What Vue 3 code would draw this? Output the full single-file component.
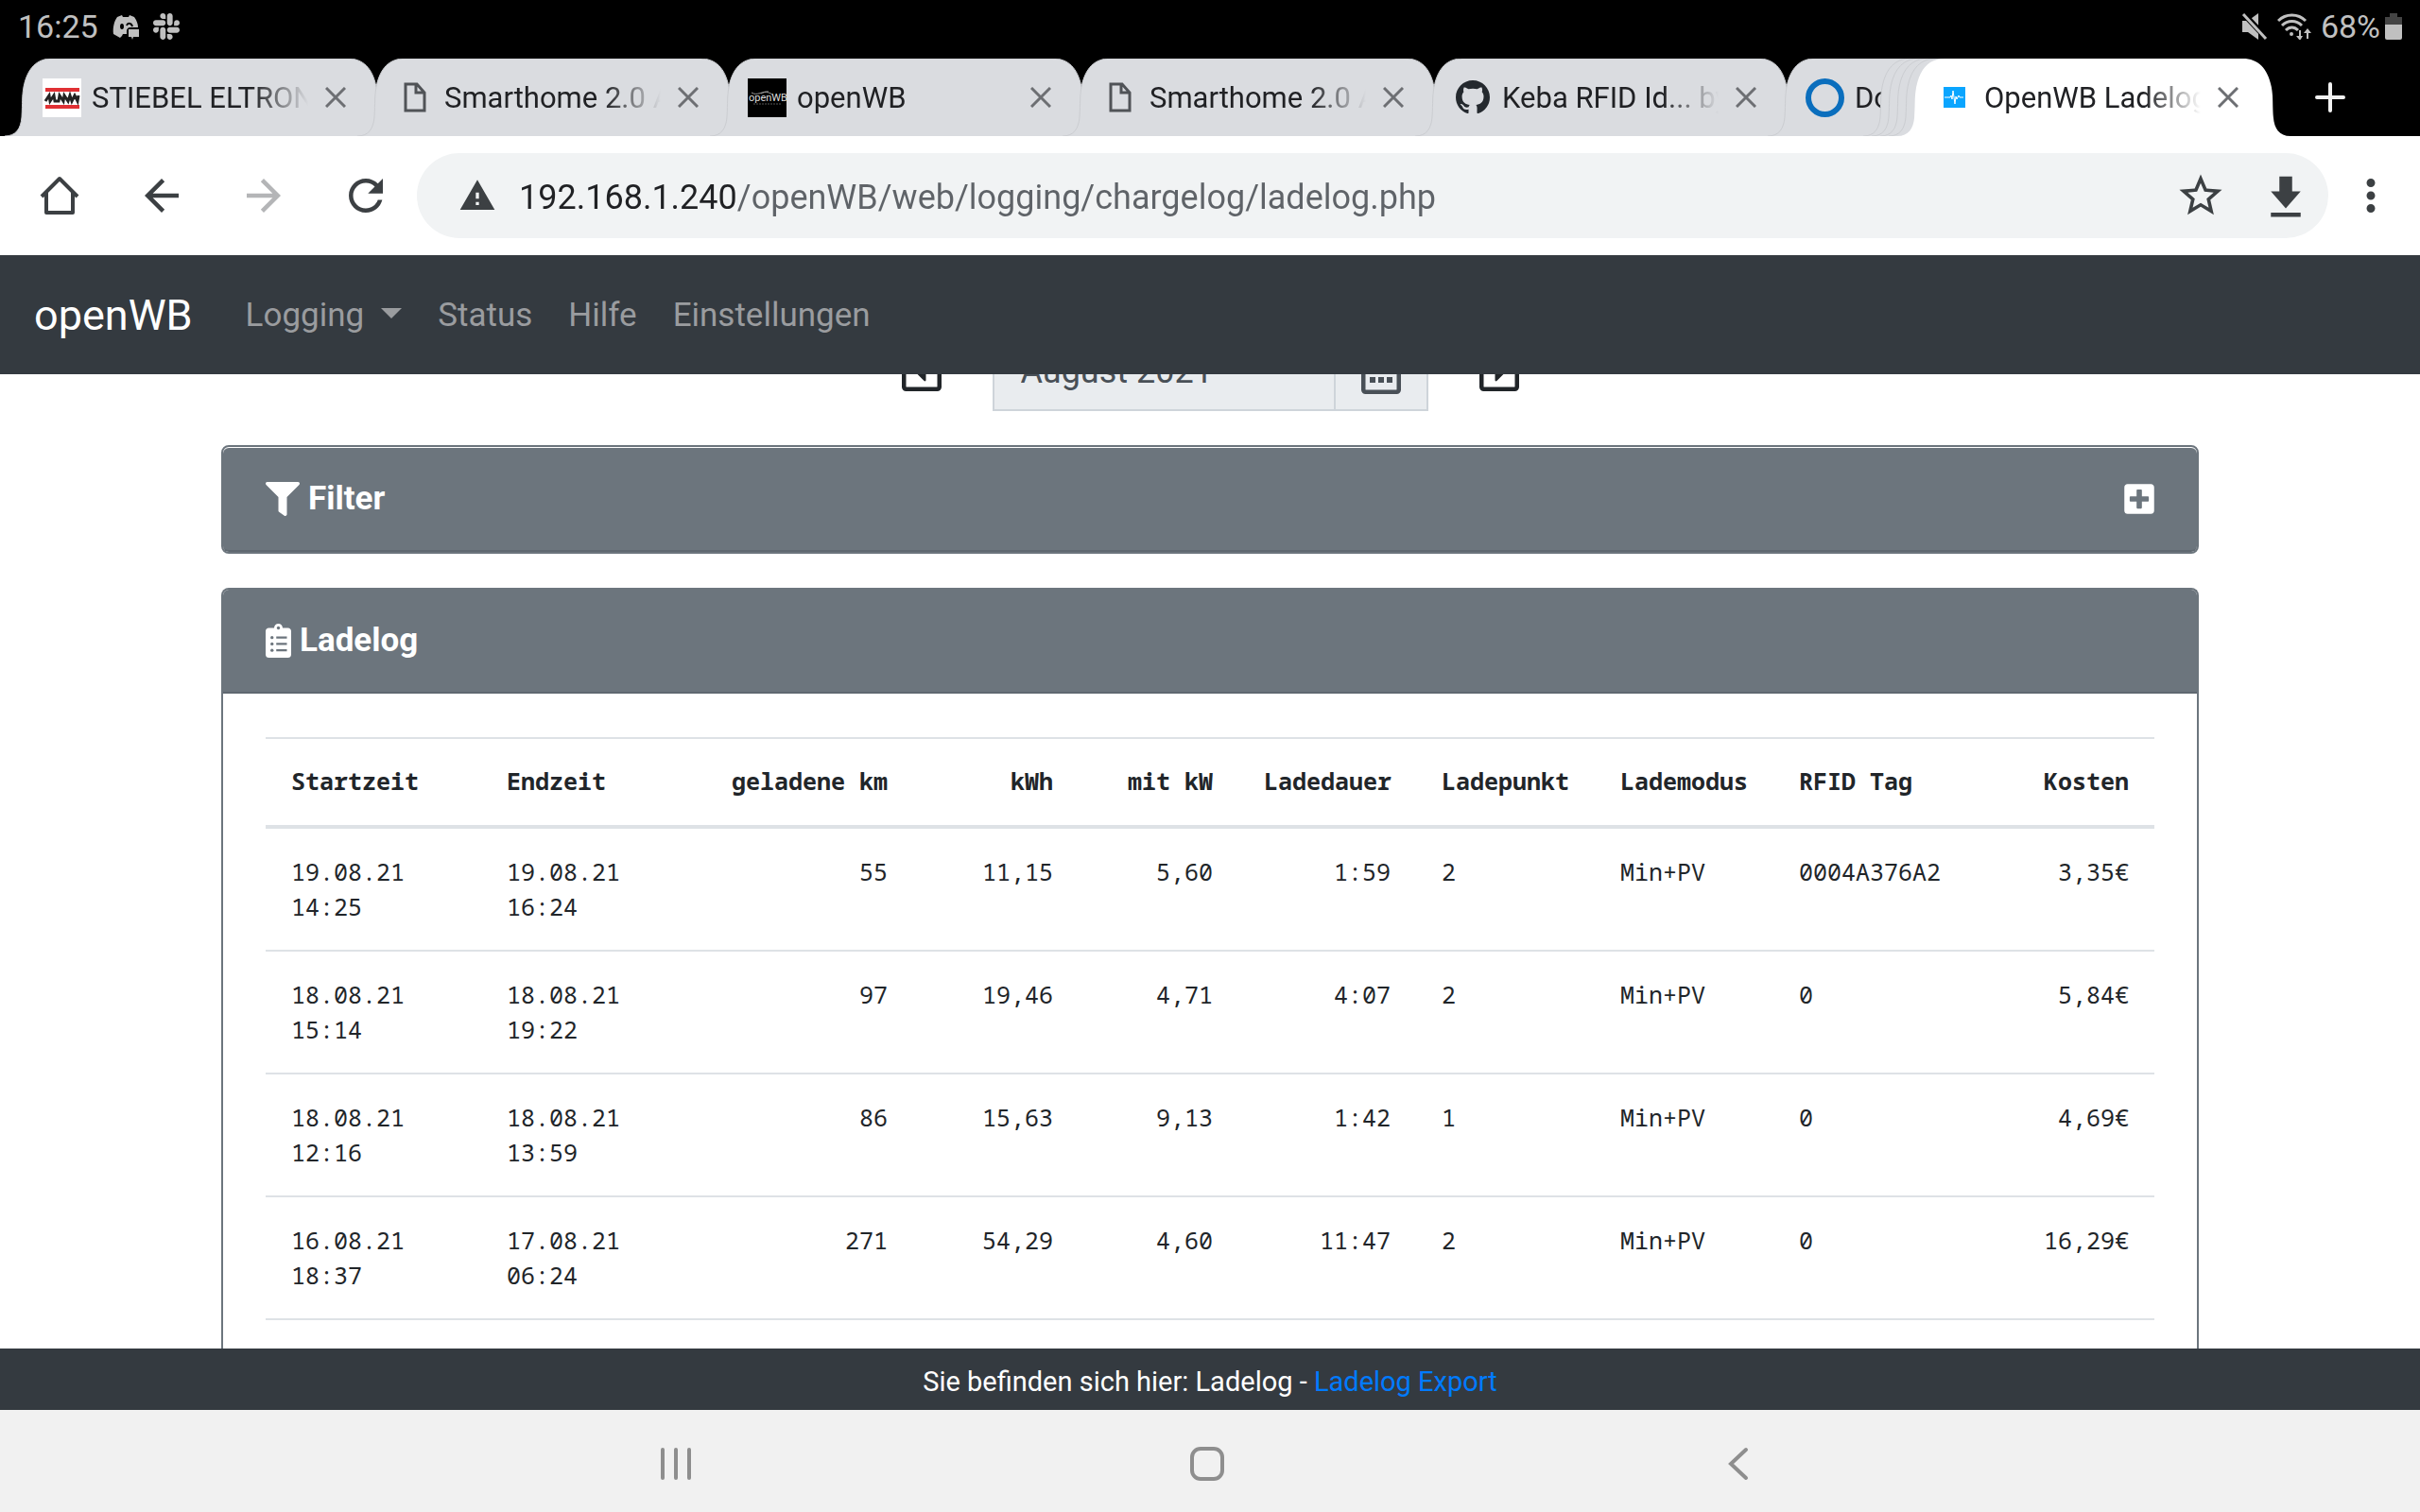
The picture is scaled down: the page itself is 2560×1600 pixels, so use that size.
<script setup>
import { ref } from 'vue'

const url = ref('192.168.1.240/openWB/web/logging/chargelog/ladelog.php')
const month = ref('August 2021')

const tabs = [
  { title: 'STIEBEL ELTRON', icon: 'stiebel' },
  { title: 'Smarthome 2.0 A', icon: 'page' },
  { title: 'openWB', icon: 'openwb' },
  { title: 'Smarthome 2.0 A', icon: 'page' },
  { title: 'Keba RFID Id... by', icon: 'github' },
  { title: 'Do', icon: 'ring', state: 'covered' },
  { state: 'tucked' },
  { state: 'tucked' },
  { state: 'tucked' },
  { state: 'tucked' },
  { title: 'OpenWB Ladelog', icon: 'pulse', state: 'active' }
]

const columns = [
  { key: 'start', label: 'Startzeit', width: 228 },
  { key: 'end', label: 'Endzeit', width: 228 },
  { key: 'km', label: 'geladene km', width: 229, right: true },
  { key: 'kwh', label: 'kWh', width: 175, right: true },
  { key: 'kw', label: 'mit kW', width: 169, right: true },
  { key: 'duration', label: 'Ladedauer', width: 188, right: true },
  { key: 'point', label: 'Ladepunkt', width: 189 },
  { key: 'mode', label: 'Lademodus', width: 189 },
  { key: 'rfid', label: 'RFID Tag', width: 214 },
  { key: 'cost', label: 'Kosten', width: 189, right: true }
]

const rows = [
  { start: '19.08.21 14:25', end: '19.08.21 16:24', km: '55', kwh: '11,15', kw: '5,60', duration: '1:59', point: '2', mode: 'Min+PV', rfid: '0004A376A2', cost: '3,35€' },
  { start: '18.08.21 15:14', end: '18.08.21 19:22', km: '97', kwh: '19,46', kw: '4,71', duration: '4:07', point: '2', mode: 'Min+PV', rfid: '0', cost: '5,84€' },
  { start: '18.08.21 12:16', end: '18.08.21 13:59', km: '86', kwh: '15,63', kw: '9,13', duration: '1:42', point: '1', mode: 'Min+PV', rfid: '0', cost: '4,69€' },
  { start: '16.08.21 18:37', end: '17.08.21 06:24', km: '271', kwh: '54,29', kw: '4,60', duration: '11:47', point: '2', mode: 'Min+PV', rfid: '0', cost: '16,29€' }
]
</script>

<template>
  <div class="screen">
    <header class="status-bar">
      <div class="status-group">
        <span>16:25</span>
        <svg class="status-icon" viewBox="0 0 28 28">
          <path d="M5 4 10 2l1 2h6l1-2 5 2c3 4 4 8 4 11h-8c-3 0-4 2-4 4v3h-4l-1 2-2 2-7-4C0 15 2 8 5 4z" />
          <ellipse cx="10" cy="14" rx="2" ry="3" fill="#000" />
          <path d="M15 13c1-3 5-3 6 1" fill="none" stroke="#000" stroke-width="2" />
          <path d="M17 17h11v8h-6l-1 3-1-3h-3z" />
        </svg>
        <svg class="status-icon slack" viewBox="0 32 448 448">
          <path d="M94.12 315.1c0 25.9-21.16 47.06-47.06 47.06S0 341 0 315.1c0-25.9 21.16-47.06 47.06-47.06h47.06v47.06zm23.72 0c0-25.9 21.16-47.06 47.06-47.06s47.06 21.16 47.06 47.06v117.84c0 25.9-21.16 47.06-47.06 47.06s-47.06-21.16-47.06-47.06V315.1zm47.06-188.98c-25.9 0-47.06-21.16-47.06-47.06S139 32 164.9 32s47.06 21.16 47.06 47.06v47.06H164.9zm0 23.72c25.9 0 47.06 21.16 47.06 47.06s-21.16 47.06-47.06 47.06H47.06C21.16 243.96 0 222.8 0 196.9s21.16-47.06 47.06-47.06H164.9zm188.98 47.06c0-25.9 21.16-47.06 47.06-47.06 25.9 0 47.06 21.16 47.06 47.06s-21.16 47.06-47.06 47.06h-47.06V196.9zm-23.72 0c0 25.9-21.16 47.06-47.06 47.06-25.9 0-47.06-21.16-47.06-47.06V79.06c0-25.9 21.16-47.06 47.06-47.06 25.9 0 47.06 21.16 47.06 47.06V196.9zM283.1 385.88c25.9 0 47.06 21.16 47.06 47.06 0 25.9-21.16 47.06-47.06 47.06-25.9 0-47.06-21.16-47.06-47.06v-47.06h47.06zm0-23.72c-25.9 0-47.06-21.16-47.06-47.06 0-25.9 21.16-47.06 47.06-47.06h117.84c25.9 0 47.06 21.16 47.06 47.06 0 25.9-21.16 47.06-47.06 47.06H283.1z" />
        </svg>
      </div>
      <div class="status-group system">
        <svg class="status-icon" viewBox="0 0 28 28">
          <path d="M1 8h6l11-8v28L7 20H1z" />
          <path d="M0 -2 28 28" stroke="#000" stroke-width="6" />
          <path d="M2 1 26 27" stroke="#c0c0c0" stroke-width="3" />
        </svg>
        <svg class="status-icon wifi" viewBox="0 0 36 28">
          <g fill="none" stroke="#c0c0c0" stroke-width="3">
            <path d="M1 8c8-8 21-8 29 0" />
            <path d="M5 13c6-6 15-6 21 0" />
            <path d="M9 18c4-4 9-4 13 0" />
          </g>
          <circle cx="15" cy="22" r="2" />
          <path d="M23 18h2v6h2l-3 5-4-5h3zM31 27h2v-6h3l-4-5-4 5h3z" />
        </svg>
        <span>68%</span>
        <svg class="status-icon battery" viewBox="0 0 18 28">
          <path d="M5 0h8v4h5v9H0V4h5z" fill="#444" />
          <path d="M0 12h18v14q0 2-2 2H2q-2 0-2-2z" />
        </svg>
      </div>
    </header>

    <nav class="tab-strip" aria-label="Tabs">
      <div v-for="(tab, i) in tabs" :key="i" class="tab" :class="tab.state">
        <svg class="tab-shape" viewBox="0 0 413 82" preserveAspectRatio="none">
          <path d="M0 82C12 82 17 74 18 62C19 45 18 42 20 30C24 10 34 0 50 0H363C379 0 389 10 393 30C395 42 394 45 395 62C396 74 401 82 413 82" />
        </svg>
        <template v-if="tab.title">
          <span class="favicon">
            <svg v-if="tab.icon === 'stiebel'" width="41" height="41" viewBox="0 0 41 41">
              <path d="M0 0h41v41H0z" fill="#fff" />
              <path d="M3 10h36v4H3zM3 28h36v4H3z" fill="#e03034" />
              <path d="M3 24l4-6 1 6 4-6 1 6h4l1-6 4 6 1-6 4 6 2-6 2 6 3-6 3 6 1-6" fill="none" stroke="#222" stroke-width="3" />
            </svg>
            <svg v-else-if="tab.icon === 'page'" width="24" height="32" viewBox="0 0 24 32">
              <path d="M2 2h12l8 9v19H2zM13 2v9h9" fill="none" stroke="#505357" stroke-width="3" />
            </svg>
            <svg v-else-if="tab.icon === 'openwb'" width="41" height="41" viewBox="0 0 41 41">
              <path d="M0 0h41v41H0z" />
              <path d="M4 15c6 4 12-2 18-1M14 16c5-3 10-1 13 2" fill="none" stroke="#999" />
              <text x="1" y="24" font-size="11" fill="#ddd">openWB</text>
              <path d="M6 27h29" stroke="#555" stroke-dasharray="2 1" />
            </svg>
            <svg v-else-if="tab.icon === 'github'" width="36" height="36" viewBox="0 0 16 16">
              <path d="M8 0C3.58 0 0 3.58 0 8c0 3.54 2.29 6.53 5.47 7.59.4.07.55-.17.55-.38 0-.19-.01-.82-.01-1.49-2.01.37-2.53-.49-2.69-.94-.09-.23-.48-.94-.82-1.13-.28-.15-.68-.52-.01-.53.63-.01 1.08.58 1.23.82.72 1.21 1.87.87 2.33.66.07-.52.28-.87.51-1.07-1.78-.2-3.64-.89-3.64-3.95 0-.87.31-1.59.82-2.15-.08-.2-.36-1.02.08-2.12 0 0 .67-.21 2.2.82.64-.18 1.32-.27 2-.27s1.36.09 2 .27c1.53-1.04 2.2-.82 2.2-.82.44 1.1.16 1.92.08 2.12.51.56.82 1.27.82 2.15 0 3.07-1.87 3.75-3.65 3.95.29.25.54.73.54 1.48 0 1.07-.01 1.93-.01 2.2 0 .21.15.46.55.38A8.01 8.01 0 0 0 16 8c0-4.42-3.58-8-8-8z" fill="#24292e" />
            </svg>
            <svg v-else-if="tab.icon === 'ring'" width="41" height="41" viewBox="0 0 41 41">
              <circle cx="20.500" cy="20.500" r="17.500" fill="none" stroke="#0a6ebd" stroke-width="6" />
            </svg>
            <svg v-else width="23" height="22" viewBox="0 0 23 22">
              <path d="M0 0h23v22H0z" fill="#0aa5ff" />
              <path d="M1 11h6l1-2 1 4 1-9 2 14 1-8 1 3 2-4 1 2h4" fill="none" stroke="#fff" stroke-width="1" />
            </svg>
          </span>
          <span class="tab-title">{{ tab.title }}</span>
          <button v-if="tab.state !== 'covered'" class="icon-button" type="button" aria-label="Tab schließen">
            <svg width="22" height="22" viewBox="0 0 22 22">
              <path d="M1 1 21 21M21 1 1 21" stroke="#6d6f73" stroke-width="3" />
            </svg>
          </button>
        </template>
      </div>
      <button class="icon-button new-tab" type="button" aria-label="Neuer Tab">
        <svg width="32" height="32" viewBox="0 0 32 32">
          <path d="M16 2v28M2 16h28" stroke="#f1f1f1" stroke-width="4" stroke-linecap="round" />
        </svg>
      </button>
    </nav>

    <div class="toolbar">
      <button class="icon-button tool" type="button" aria-label="Startseite">
        <svg width="54" height="54" viewBox="0 0 54 54">
          <path d="M8 28 27 9l19 19M13 24v21h28V24" fill="none" stroke="#3c4043" stroke-width="4" stroke-linejoin="round" />
        </svg>
      </button>
      <button class="icon-button tool" type="button" aria-label="Zurück">
        <svg width="54" height="54" viewBox="0 0 24 24">
          <path d="M20 11H7.830l5.590-5.590L12 4l-8 8 8 8 1.410-1.410L7.830 13H20v-2z" fill="#3c4043" />
        </svg>
      </button>
      <button class="icon-button tool" type="button" aria-label="Vorwärts" disabled>
        <svg width="54" height="54" viewBox="0 0 24 24">
          <path d="M12 4l-1.410 1.410L16.170 11H4v2h12.170l-5.580 5.590L12 20l8-8z" fill="#b4b5b7" />
        </svg>
      </button>
      <button class="icon-button tool" type="button" aria-label="Neu laden">
        <svg width="54" height="54" viewBox="0 0 24 24">
          <path d="M17.650 6.350C16.200 4.900 14.210 4 12 4c-4.420 0-7.990 3.580-7.990 8s3.570 8 7.990 8c3.730 0 6.840-2.550 7.730-6h-2.080c-.82 2.330-3.040 4-5.650 4-3.310 0-6-2.690-6-6s2.690-6 6-6c1.660 0 3.140.69 4.220 1.780L13 11h7V4l-2.350 2.350z" fill="#3c4043" />
        </svg>
      </button>
      <div class="address">
        <svg width="40" height="40" viewBox="0 0 24 24">
          <path d="M1 21h22L12 2 1 21zm12-3h-2v-2h2v2zm0-4h-2v-4h2v4z" fill="#3c4043" />
        </svg>
        <input v-model="url" class="url" type="text" aria-label="Adresse" />
        <button class="icon-button tool-small" type="button" aria-label="Lesezeichen">
          <svg width="54" height="54" viewBox="0 0 24 24">
            <path d="M22 9.240l-7.190-.62L12 2 9.190 8.630 2 9.240l5.460 4.730L5.820 21 12 17.270 18.180 21l-1.630-7.030L22 9.240zM12 15.400l-3.760 2.270 1-4.280-3.320-2.880 4.380-.38L12 6.100l1.710 4.040 4.380.38-3.320 2.880 1 4.280L12 15.400z" fill="#3c4043" />
          </svg>
        </button>
        <button class="icon-button tool-small" type="button" aria-label="Herunterladen">
          <svg width="54" height="54" viewBox="0 0 24 24">
            <path d="M19 11h-4V4H9v7H5l7 8 7-8zM5 21v2h14v-2z" fill="#3c4043" transform="translate(0 -1)" />
          </svg>
        </button>
      </div>
      <button class="icon-button tool-small" type="button" aria-label="Menü">
        <svg width="54" height="54" viewBox="0 0 24 24">
          <path d="M12 8c1.100 0 2-.9 2-2s-.9-2-2-2-2 .9-2 2 .9 2 2 2zm0 2c-1.100 0-2 .9-2 2s.9 2 2 2 2-.9 2-2-.9-2-2-2zm0 6c-1.100 0-2 .9-2 2s.9 2 2 2 2-.9 2-2-.9-2-2-2z" fill="#3c4043" />
        </svg>
      </button>
    </div>

    <nav class="navbar">
      <a class="brand" href="#">openWB</a>
      <a class="nav-link dropdown" href="#">Logging</a>
      <a class="nav-link" href="#">Status</a>
      <a class="nav-link" href="#">Hilfe</a>
      <a class="nav-link" href="#">Einstellungen</a>
    </nav>

    <main class="content">
      <form class="month-row" @submit.prevent>
        <button class="icon-button" type="button" aria-label="Vorheriger Monat">
          <svg width="42" height="48" viewBox="0 0 448 512">
            <path d="M272 157.100v197.800c0 10.700-13 16.100-20.500 8.500l-98.300-98.900c-4.700-4.700-4.700-12.200 0-16.900l98.300-98.900c7.500-7.700 20.500-2.300 20.500 8.400zM448 80v352c0 26.500-21.500 48-48 48H48c-26.500 0-48-21.500-48-48V80c0-26.500 21.500-48 48-48h352c26.500 0 48 21.500 48 48zm-48 346V86c0-3.300-2.700-6-6-6H54c-3.300 0-6 2.700-6 6v340c0 3.300 2.700 6 6 6h340c3.300 0 6-2.700 6-6z" fill="#212529" />
          </svg>
        </button>
        <div class="month-group">
          <input v-model="month" class="month" type="text" aria-label="Monat" readonly />
          <button class="icon-button calendar" type="button" aria-label="Kalender">
            <svg width="42" height="48" viewBox="0 0 448 512">
              <path d="M96 224h64v64H96zM192 224h64v64h-64zM288 224h64v64h-64zM96 320h64v64H96zM192 320h64v64h-64zM288 320h64v64h-64z" fill="#495057" />
              <path d="M448 112v352c0 26.500-21.500 48-48 48H48c-26.500 0-48-21.500-48-48V112c0-26.500 21.500-48 48-48h48V12c0-6.600 5.400-12 12-12h40c6.600 0 12 5.400 12 12v52h128V12c0-6.600 5.400-12 12-12h40c6.600 0 12 5.400 12 12v52h48c26.500 0 48 21.500 48 48zm-48 346V160H48v298c0 3.300 2.700 6 6 6h340c3.300 0 6-2.700 6-6z" fill="#495057" />
            </svg>
          </button>
        </div>
        <button class="icon-button" type="button" aria-label="Nächster Monat">
          <svg width="42" height="48" viewBox="0 0 448 512">
            <path d="M176 354.900V157.100c0-10.700 13-16.100 20.500-8.500l98.300 98.900c4.700 4.700 4.700 12.200 0 16.900l-98.300 98.900c-7.500 7.700-20.500 2.300-20.500-8.400zM448 80v352c0 26.500-21.500 48-48 48H48c-26.500 0-48-21.500-48-48V80c0-26.500 21.500-48 48-48h352c26.500 0 48 21.500 48 48zm-48 346V86c0-3.300-2.700-6-6-6H54c-3.300 0-6 2.700-6 6v340c0 3.300 2.700 6 6 6h340c3.300 0 6-2.700 6-6z" fill="#212529" />
          </svg>
        </button>
      </form>

      <section class="card filter-card">
        <div class="card-header">
          <svg width="36" height="36" viewBox="0 0 512 512">
            <path d="M487.976 0H24.028C2.710 0-8.047 25.866 7.058 40.971L192 225.941V432c0 7.831 3.821 15.170 10.237 19.662l80 55.980C298.020 518.690 320 507.493 320 487.980V225.941l184.947-184.970C520.021 25.896 509.338 0 487.976 0z" fill="#fff" />
          </svg>
          <h2>Filter</h2>
          <button class="icon-button expand" type="button" aria-label="Filter aufklappen">
            <svg width="32" height="36" viewBox="0 0 448 512">
              <path d="M400 32H48C21.500 32 0 53.500 0 80v352c0 26.500 21.500 48 48 48h352c26.500 0 48-21.500 48-48V80c0-26.500-21.500-48-48-48zm-32 252c0 6.600-5.400 12-12 12h-92v92c0 6.600-5.400 12-12 12h-56c-6.600 0-12-5.400-12-12v-92H92c-6.600 0-12-5.400-12-12v-56c0-6.600 5.400-12 12-12h92v-92c0-6.600 5.400-12 12-12h56c6.600 0 12 5.400 12 12v92h92c6.600 0 12 5.400 12 12v56z" fill="#fff" />
            </svg>
          </button>
        </div>
      </section>

      <section class="card log-card">
        <div class="card-header">
          <svg width="27" height="36" viewBox="0 0 384 512">
            <path d="M336 64h-80c0-35.300-28.700-64-64-64s-64 28.700-64 64H48C21.500 64 0 85.500 0 112v352c0 26.500 21.500 48 48 48h288c26.500 0 48-21.500 48-48V112c0-26.500-21.500-48-48-48z" fill="#fff" />
            <g fill="#6c757d">
              <circle cx="192" cy="64" r="24" />
              <circle cx="96" cy="208" r="24" />
              <circle cx="96" cy="304" r="24" />
              <circle cx="96" cy="400" r="24" />
              <path d="M160 192h160v32H160zM160 288h160v32H160zM160 384h160v32H160z" />
            </g>
          </svg>
          <h2>Ladelog</h2>
        </div>
        <div class="card-body">
          <table>
            <colgroup>
              <col v-for="col in columns" :key="col.key" :style="{ width: col.width + 'px' }" />
            </colgroup>
            <thead>
              <tr>
                <th v-for="col in columns" :key="col.key" :class="{ right: col.right }" scope="col">{{ col.label }}</th>
              </tr>
            </thead>
            <tbody>
              <tr v-for="row in rows" :key="row.start">
                <td v-for="col in columns" :key="col.key" :class="{ right: col.right }">{{ row[col.key] }}</td>
              </tr>
            </tbody>
          </table>
        </div>
      </section>
    </main>

    <footer class="footer">
      Sie befinden sich hier: Ladelog - <a href="#">Ladelog Export</a>
    </footer>

    <div class="system-bar">
      <button class="icon-button" type="button" aria-label="Letzte Apps">
        <svg width="38" height="38" viewBox="0 0 38 38">
          <path d="M5 4v30M19 4v30M33 4v30" stroke="#8e8e8e" stroke-width="4" stroke-linecap="round" />
        </svg>
      </button>
      <button class="icon-button" type="button" aria-label="Home">
        <svg width="38" height="38" viewBox="0 0 38 38">
          <rect x="3" y="3" width="32" height="32" rx="9" fill="none" stroke="#8e8e8e" stroke-width="4" />
        </svg>
      </button>
      <button class="icon-button" type="button" aria-label="Zurück">
        <svg width="38" height="38" viewBox="0 0 38 38">
          <path d="M27 4 11 19l16 15" fill="none" stroke="#8e8e8e" stroke-width="4" stroke-linecap="round" />
        </svg>
      </button>
    </div>
  </div>
</template>

<style>
body {
  margin: 0;
  background: #fff;
}
</style>

<style scoped>
.screen {
  display: flex;
  flex-direction: column;
  height: 100vh;
  overflow: hidden;
  font-family: Roboto, 'Liberation Sans', sans-serif;
  color: #212529;
}

svg {
  display: block;
  flex: none;
}

a {
  text-decoration: none;
}

.icon-button {
  display: flex;
  align-items: center;
  justify-content: center;
  flex: none;
  padding: 0;
  border: 0;
  background: none;
}

/* android status bar */
.status-bar {
  display: flex;
  justify-content: space-between;
  flex: none;
  height: 62px;
  padding: 0 19px;
  box-sizing: border-box;
  background: #000;
  color: #c0c0c0;
  font-size: 34px;
}
.status-group {
  display: flex;
  align-items: center;
  height: 56px;
  gap: 15px;
}
.status-group.system {
  gap: 10px;
}
.status-icon {
  width: 28px;
  height: 28px;
  fill: #c0c0c0;
}
.wifi {
  width: 36px;
}
.battery {
  width: 18px;
  margin-left: -5px;
}

/* browser tabs */
.tab-strip {
  display: flex;
  flex: none;
  height: 82px;
  padding-left: 45px;
  background: #000;
}
.tab {
  position: relative;
  display: flex;
  align-items: center;
  flex: none;
  width: 413px;
  margin-left: -40px;
  padding: 0 52px 0 40px;
  box-sizing: border-box;
}
.tab-shape {
  position: absolute;
  inset: 0;
  width: 100%;
  height: 100%;
  fill: #dadce0;
  stroke: #cbcdd1;
}
.tab.covered {
  margin-right: 92px;
}
.tab.tucked,
.tab.active {
  margin-left: -404px;
}
.tab.active {
  width: 416px;
  padding-right: 55px;
}
.tab.active .tab-shape {
  fill: #fff;
  stroke: none;
}
.favicon {
  position: relative;
  display: flex;
  justify-content: center;
  flex: none;
  width: 41px;
}
.tab-title {
  position: relative;
  flex: 1;
  min-width: 0;
  margin: 0 18px 0 11px;
  padding-top: 2px;
  overflow: hidden;
  white-space: nowrap;
  font-size: 31px;
  line-height: 40px;
  color: #202124;
  mask-image: linear-gradient(to right, #000 74%, transparent 100%);
}
.tab .icon-button {
  position: relative;
}
.new-tab {
  width: 84px;
}

/* toolbar */
.toolbar {
  display: flex;
  align-items: center;
  flex: none;
  height: 126px;
  padding: 0 7px 0 9px;
  box-sizing: border-box;
}
.tool {
  width: 108px;
}
.tool-small {
  width: 90px;
}
.address {
  display: flex;
  align-items: center;
  flex: 1;
  height: 90px;
  padding-left: 44px;
  box-sizing: border-box;
  border-radius: 45px;
  background: #f1f3f4;
}
.url {
  flex: 1;
  min-width: 0;
  margin-left: 24px;
  padding: 4px 0 0;
  border: 0;
  outline: 0;
  font: 36px Roboto, sans-serif;
  color: transparent;
  /* host dark, path grey */
  background: linear-gradient(to right, #202124 230px, #5f6368 230px);
  background-clip: text;
}

/* page */
.navbar {
  position: relative;
  z-index: 1;
  display: flex;
  align-items: center;
  gap: 38px;
  flex: none;
  height: 126px;
  padding: 0 36px;
  background: #343a40;
}
.brand {
  margin-right: 18px;
  font-size: 45px;
  color: #fff;
}
.nav-link {
  font-size: 35px;
  color: #9a9c9f;
}
.dropdown {
  display: flex;
  align-items: center;
  gap: 18px;
}
.dropdown::after {
  content: '';
  margin-bottom: 4px;
  border-top: 11px solid;
  border-left: 11px solid transparent;
  border-right: 11px solid transparent;
}

.content {
  display: flex;
  flex-direction: column;
  align-items: center;
  gap: 36px;
  flex: 1;
  min-height: 0;
  overflow: hidden;
}
.month-row {
  display: flex;
  align-items: center;
  gap: 54px;
  flex: none;
  margin-top: -46px;
}
.month-group {
  display: flex;
  height: 85px;
  width: 461px;
  box-sizing: border-box;
  border: 2px solid #ced4da;
  background: #e9ecef;
}
.month {
  flex: 1;
  min-width: 0;
  padding: 0 28px;
  border: 0;
  background: none;
  font: 36px Roboto, sans-serif;
  color: #495057;
}
.calendar {
  width: 98px;
  border-left: 2px solid #ced4da;
}

.card {
  flex: none;
  width: 82%;
  max-width: 2092px;
  box-sizing: border-box;
  border: 2px solid #6c757d;
  border-radius: 8px;
}
.card-header {
  display: flex;
  align-items: center;
  gap: 9px;
  height: 110px;
  padding: 0 45px 1px;
  box-sizing: border-box;
  border-bottom: 2px solid #5f6870;
  border-radius: 6px 6px 0 0;
  background: #6c757d;
  color: #fff;
}
.card-header h2 {
  margin: 0;
  font-size: 35px;
  font-weight: 700;
}
.filter-card {
  padding-top: 1px;
}
.filter-card .card-header {
  border-radius: 6px;
}
.expand {
  margin-left: auto;
}
.log-card {
  flex: 1 0 auto;
  border-bottom: 0;
  border-radius: 8px 8px 0 0;
}
.card-body {
  padding: 46px 45px;
}

table {
  width: 100%;
  table-layout: fixed;
  border-spacing: 0;
  border-bottom: 2px solid #dee2e6;
  font-family: 'Noto Sans Mono', 'DejaVu Sans Mono', monospace;
  font-size: 25px;
  line-height: 37px;
}
th,
td {
  padding: 27px;
  text-align: left;
  vertical-align: top;
}
th {
  padding: 26px 27px 28px;
  border-top: 2px solid #dee2e6;
  border-bottom: 4px solid #dee2e6;
  white-space: nowrap;
}
tr + tr td {
  border-top: 2px solid #dee2e6;
}
th.right,
td.right {
  text-align: right;
}

.footer {
  position: relative;
  flex: none;
  height: 65px;
  background: #343a40;
  color: #fff;
  text-align: center;
  font-size: 29px;
  line-height: 70px;
}
.footer a {
  color: #007bff;
}

.system-bar {
  display: flex;
  align-items: center;
  justify-content: center;
  flex: none;
  height: 108px;
  padding: 6px 6px 0 0;
  box-sizing: border-box;
  background: #f1f1f1;
}
.system-bar .icon-button {
  width: 22%;
}
</style>
